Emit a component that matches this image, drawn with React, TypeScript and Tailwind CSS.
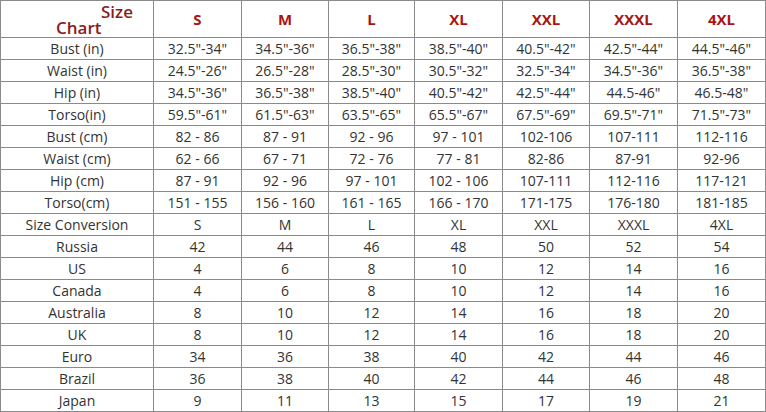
import React from 'react'

const SIZES = ['S', 'M', 'L', 'XL', 'XXL', 'XXXL', '4XL']

const ROWS: [string, string[]][] = [
  ['Bust (in)', ['32.5"-34"', '34.5"-36"', '36.5"-38"', '38.5"-40"', '40.5"-42"', '42.5"-44"', '44.5"-46"']],
  ['Waist (in)', ['24.5"-26"', '26.5"-28"', '28.5"-30"', '30.5"-32"', '32.5"-34"', '34.5"-36"', '36.5"-38"']],
  ['Hip (in)', ['34.5"-36"', '36.5"-38"', '38.5"-40"', '40.5"-42"', '42.5"-44"', '44.5-46"', '46.5-48"']],
  ['Torso(in)', ['59.5"-61"', '61.5"-63"', '63.5"-65"', '65.5"-67"', '67.5"-69"', '69.5"-71"', '71.5"-73"']],
  ['Bust (cm)', ['82 - 86', '87 - 91', '92 - 96', '97 - 101', '102-106', '107-111', '112-116']],
  ['Waist (cm)', ['62 - 66', '67 - 71', '72 - 76', '77 - 81', '82-86', '87-91', '92-96']],
  ['Hip (cm)', ['87 - 91', '92 - 96', '97 - 101', '102 - 106', '107-111', '112-116', '117-121']],
  ['Torso(cm)', ['151 - 155', '156 - 160', '161 - 165', '166 - 170', '171-175', '176-180', '181-185']],
  ['Size Conversion', ['S', 'M', 'L', 'XL', 'XXL', 'XXXL', '4XL']],
  ['Russia', ['42', '44', '46', '48', '50', '52', '54']],
  ['US', ['4', '6', '8', '10', '12', '14', '16']],
  ['Canada', ['4', '6', '8', '10', '12', '14', '16']],
  ['Australia', ['8', '10', '12', '14', '16', '18', '20']],
  ['UK', ['8', '10', '12', '14', '16', '18', '20']],
  ['Euro', ['34', '36', '38', '40', '42', '44', '46']],
  ['Brazil', ['36', '38', '40', '42', '44', '46', '48']],
  ['Japan', ['9', '11', '13', '15', '17', '19', '21']],
]

export default function App() {
  return (
    <div className="w-[766px] h-[412px] overflow-hidden bg-white" style={{ fontFamily: '"Open Sans", "Liberation Sans", sans-serif' }}>
      <div className="grid grid-cols-[153px_88px_87px_86px_88px_87px_88px_88px] border-t border-l border-[#8a8a8a] w-[766px]">
        {/* header */}
        <div className="h-[37px] border-r border-b border-[#8a8a8a] relative text-[17px] font-semibold text-[#8a1c1c] leading-none">
          <span className="absolute left-[100px] top-[2px]">Size</span>
          <span className="absolute left-[55px] top-[18px]">Chart</span>
        </div>
        {SIZES.map(s => (
          <div key={s} className="h-[37px] border-r border-b border-[#8a8a8a] flex items-center justify-center text-[15px] font-bold text-[#a81515]">
            {s}
          </div>
        ))}

        {ROWS.map(([label, values]) => (
          <React.Fragment key={label}>
            <div className="h-[22px] border-r border-b border-[#8a8a8a] flex items-center justify-center text-[14px] text-[#333]">
              {label}
            </div>
            {values.map((v, i) => (
              <div key={i} className="h-[22px] border-r border-b border-[#8a8a8a] flex items-center justify-center text-[14px] text-[#333]">
                {v}
              </div>
            ))}
          </React.Fragment>
        ))}
      </div>
    </div>
  )
}
